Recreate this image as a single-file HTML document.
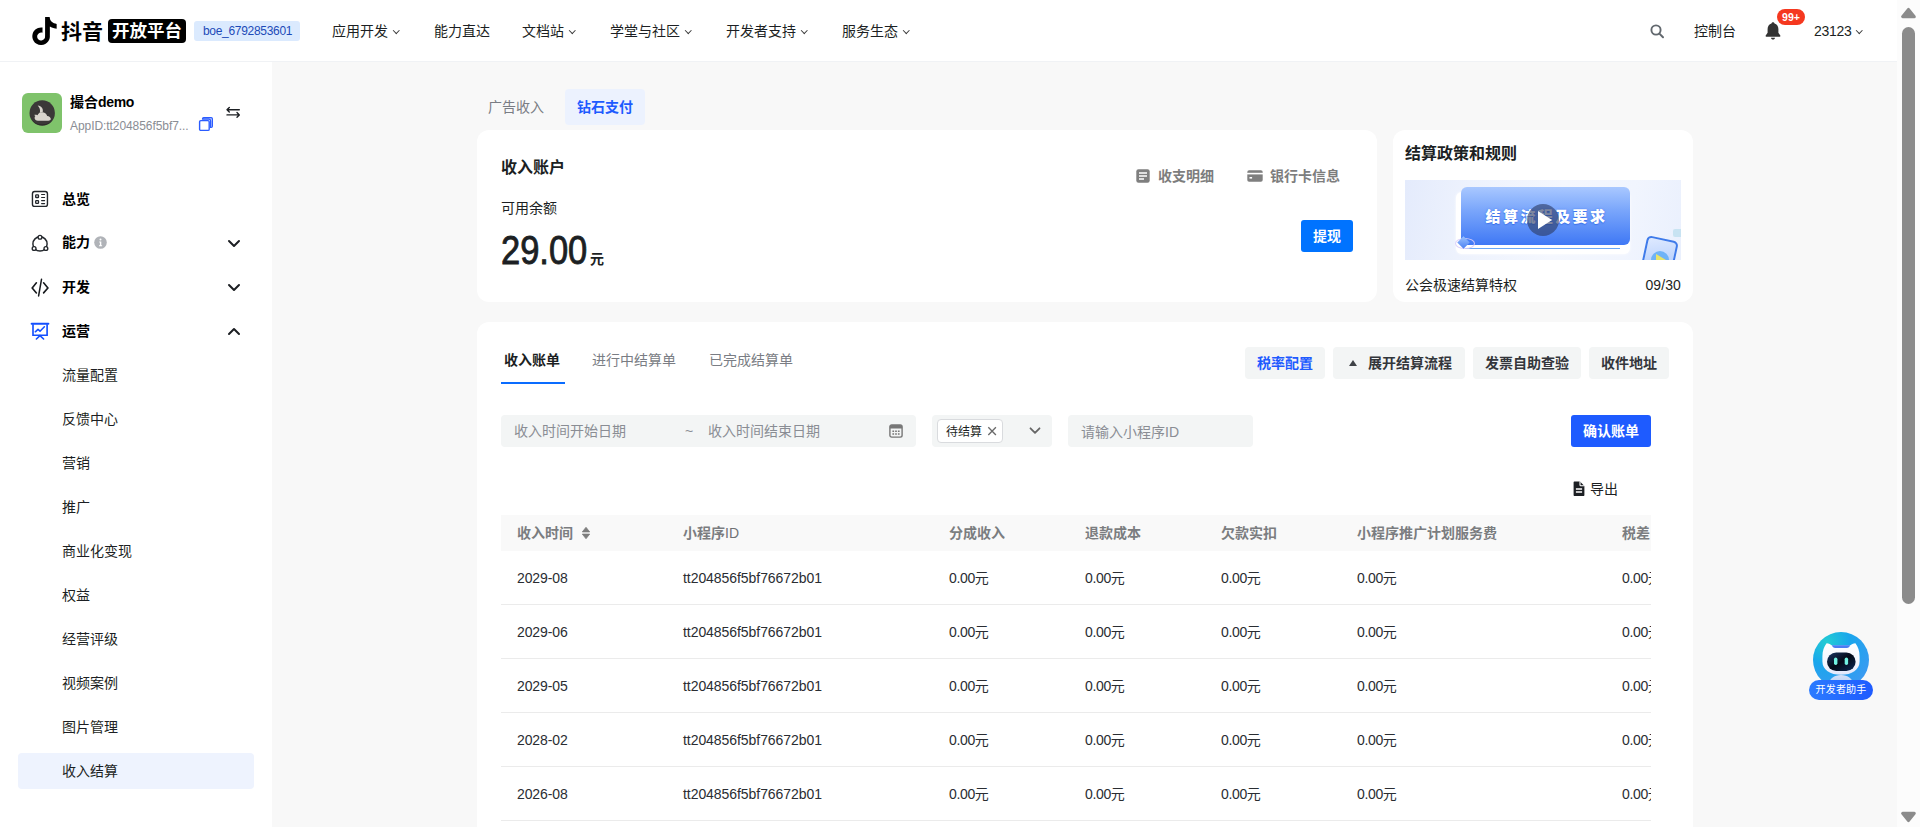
<!DOCTYPE html>
<html lang="zh-CN">
<head>
<meta charset="utf-8">
<title>抖音开放平台</title>
<style>
*{box-sizing:border-box;margin:0;padding:0}
html,body{width:1920px;height:827px;overflow:hidden;background:#f8f8f8;font-family:"Liberation Sans","Noto Sans CJK SC",sans-serif;font-size:14px;color:#1c1f23;-webkit-font-smoothing:antialiased}
.abs{position:absolute}
#hdr{position:absolute;left:0;top:0;width:1897px;height:62px;background:#fff;border-bottom:1px solid #f0f2f5}
#side{position:absolute;left:0;top:62px;width:272px;height:765px;background:#fff}
#sb{position:absolute;left:1897px;top:0;width:23px;height:827px;background:#fcfcfc}
.t{position:absolute;white-space:nowrap;line-height:20px}
.b{font-weight:700}
.card{position:absolute;background:#fff;border-radius:12px}

.nav{top:21px;font-size:14px;line-height:20px;color:#1c1f23}
.chv{display:inline-block;width:4.500px;height:4.500px;border-right:1.400px solid #3a3a3a;border-bottom:1.400px solid #3a3a3a;transform:rotate(45deg);margin-left:6px;position:relative;top:-4px}

.m1{left:62px;font-size:14px;color:#000}
.m2{left:62px;font-size:14px;color:#1c1f23}

.btn{position:absolute;top:347px;height:32px;border-radius:4px;background:#f3f5f5}
.inp{position:absolute;top:415px;height:32px;border-radius:4px;background:#f3f5f5}
.ph{color:#8a8d94}
.th{top:8px;font-weight:700;color:#7b7d80;font-size:14px}
.td{color:#2a2d32;font-size:14px;letter-spacing:-0.350px}
</style>
</head>
<body>
<div id="hdr">
<svg class="abs" style="left:32px;top:17px" width="25" height="28" viewBox="1.5 0 21 24"><path fill="#000" d="M12.525.02c1.31-.02 2.61-.01 3.91-.02.08 1.53.63 3.09 1.75 4.17 1.12 1.11 2.7 1.62 4.24 1.79v4.03c-1.44-.05-2.89-.35-4.2-.97-.57-.26-1.1-.59-1.62-.93-.01 2.92.01 5.84-.02 8.75-.08 1.4-.54 2.79-1.35 3.94-1.31 1.92-3.58 3.17-5.91 3.21-1.43.08-2.86-.31-4.08-1.03-2.02-1.19-3.44-3.37-3.65-5.71-.02-.5-.03-1-.01-1.49.18-1.9 1.12-3.72 2.58-4.96 1.66-1.44 3.98-2.13 6.15-1.72.02 1.48-.04 2.96-.04 4.44-.99-.32-2.15-.23-3.02.37-.63.41-1.11 1.04-1.36 1.75-.21.51-.15 1.07-.14 1.61.24 1.64 1.82 3.02 3.5 2.87 1.12-.01 2.19-.66 2.77-1.61.19-.33.4-.67.41-1.06.1-1.79.06-3.57.07-5.36.01-4.03-.01-8.05.02-12.07z"/></svg>
<div class="t" style="left:61px;top:17px;font-size:21px;line-height:30px;font-weight:700;color:#000;letter-spacing:0px">抖音</div>
<div class="abs" style="left:108px;top:19px;width:78px;height:24px;background:#000;border-radius:4px"></div>
<div class="t" style="left:112px;top:16px;font-size:17.5px;line-height:30px;font-weight:700;color:#fff">开放平台</div>
<div class="abs" style="left:194px;top:21px;width:106px;height:20px;background:#dbeafe;border-radius:3px"></div>
<div class="t" style="left:203px;top:21px;font-size:12px;line-height:20px;color:#1d4ab8;letter-spacing:-0.3px">boe_6792853601</div>
<div class="t nav" style="left:332px">应用开发<i class="chv"></i></div>
<div class="t nav" style="left:434px">能力直达</div>
<div class="t nav" style="left:522px">文档站<i class="chv"></i></div>
<div class="t nav" style="left:610px">学堂与社区<i class="chv"></i></div>
<div class="t nav" style="left:726px">开发者支持<i class="chv"></i></div>
<div class="t nav" style="left:842px">服务生态<i class="chv"></i></div>
<svg class="abs" style="left:1649px;top:23px" width="16" height="16" viewBox="0 0 16 16"><circle cx="7" cy="7" r="4.600" fill="none" stroke="#62686e" stroke-width="1.900"/><path d="M10.400 10.600L14 14.200" stroke="#62686e" stroke-width="2" stroke-linecap="round"/></svg>
<div class="t nav" style="left:1694px">控制台</div>
<svg class="abs" style="left:1764px;top:21px" width="18" height="20" viewBox="0 0 18 20"><path fill="#333" d="M9 1.2c-.9 0-1.5.6-1.5 1.3C5 3.300 3.600 5.400 3.600 8v3.800L1.700 14.600c-.3.500 0 1.100.6 1.100h13.400c.6 0 .9-.6.6-1.100L14.400 11.800V8c0-2.600-1.400-4.700-3.900-5.500C10.500 1.800 9.900 1.200 9 1.200zM7 16.700h4c0 1.100-.9 1.900-2 1.900s-2-.8-2-1.900z"/></svg>
<div class="abs" style="left:1777px;top:9px;width:28px;height:16px;border-radius:8px;background:#f5381f"></div>
<div class="t" style="left:1777px;top:9px;width:28px;text-align:center;font-size:10.500px;line-height:17px;font-weight:700;color:#fff">99+</div>
<div class="t nav" style="left:1814px;letter-spacing:-0.3px">23123<i class="chv"></i></div>
</div>
<div id="side">
<div class="abs" style="left:22px;top:31px;width:40px;height:40px;border-radius:6px;background:#7fc36b"></div>
<svg class="abs" style="left:22px;top:31px" width="40" height="40" viewBox="0 0 40 40"><circle cx="20.200" cy="20" r="12.700" fill="#3b3838"/><path d="M9.500 26.500a12.700 12.700 0 0 0 21.400 0a14 14 0 0 1-21.400 0z" fill="#2b2828"/><path fill="#d9d4cd" d="M15.700 12.600C19.600 13 21.600 16 20.700 19.300C19.800 19 18.600 19.400 17.700 20.300C18.600 17.500 17.800 14.600 15.700 12.600Z"/><path fill="#d9d4cd" d="M12.200 21.900c1.200-.2 2.300-.1 3.300.4C16.300 20.300 18 19.200 20 19.200c2.600 0 4.600 1.600 5.200 3.800 2 .2 3.600 1.400 3.600 3 0 1.200-1.200 1.700-2.400 1.700H16c-2 0-3.400-1.200-3.400-2.800 0-.8.300-1.400.8-1.900-.5-.4-.9-.7-1.200-1.100z"/></svg>
<div class="t b" style="left:70px;top:30px;font-size:14px;color:#000">撮合<span style="letter-spacing:-0.35px">demo</span></div>
<div class="t" style="left:70px;top:55px;font-size:12px;line-height:18px;color:#8a8d94;letter-spacing:-0.07px">AppID:tt204856f5bf7...</div>
<svg class="abs" style="left:198px;top:54px" width="16" height="16" viewBox="0 0 16 16"><path d="M4.500 3.200V2.800c0-.7.500-1.200 1.200-1.200h7.500c.7 0 1.200.5 1.200 1.200v7.500c0 .7-.5 1.200-1.200 1.200h-.6V5c0-1-.8-1.800-1.800-1.800z" fill="#c3d0ff" stroke="#2b5cff" stroke-width="1.200"/><rect x="1.600" y="4.600" width="9.600" height="9.800" rx="1.200" fill="#fff" stroke="#2b5cff" stroke-width="1.400"/></svg>
<svg class="abs" style="left:225px;top:42px" width="16" height="16" viewBox="0 0 16 16"><path d="M2 5.700H14.300M2 5.700l2.300-2.300M2 5.700l2.300 2.300M14.300 10.900H2M14.300 10.900l-2.300-2.300M14.300 10.900l-2.300 2.300" fill="none" stroke="#1c1f23" stroke-width="1.400" stroke-linecap="round" stroke-linejoin="round"/></svg>

<svg class="abs" style="left:31px;top:128px" width="18" height="18" viewBox="0 0 18 18"><rect x="1.450" y="1.550" width="15" height="14.800" rx="2.200" fill="none" stroke="#22262b" stroke-width="1.400"/><rect x="4.700" y="4.800" width="2.800" height="2.700" rx=".6" fill="none" stroke="#22262b" stroke-width="1.300"/><rect x="4.700" y="10.700" width="2.800" height="2.700" rx=".6" fill="none" stroke="#22262b" stroke-width="1.300"/><path d="M10.600 4.500h3M10.600 7.500h3M10.600 10.600h3M10.600 13.600h3" stroke="#22262b" stroke-width="1.150" stroke-linecap="round"/></svg>
<div class="t b m1" style="top:127px">总览</div>

<svg class="abs" style="left:31px;top:171px" width="18" height="20" viewBox="0 0 18 20"><circle cx="9" cy="10.900" r="7.100" fill="none" stroke="#22262b" stroke-width="1.450"/><circle cx="9" cy="4.200" r="1.900" fill="#fff" stroke="#22262b" stroke-width="1.350"/><circle cx="3.100" cy="15.500" r="1.900" fill="#fff" stroke="#22262b" stroke-width="1.350"/><circle cx="14.900" cy="15.500" r="1.900" fill="#fff" stroke="#22262b" stroke-width="1.350"/></svg>
<div class="t b m1" style="top:170px">能力</div>
<svg class="abs" style="left:94px;top:174px" width="13" height="13" viewBox="0 0 13 13"><circle cx="6.500" cy="6.500" r="6.300" fill="#b0b3b8"/><circle cx="6.500" cy="3.500" r="1" fill="#fff"/><path d="M5.300 5.600h2v3.600h.8v1H5v-1h.9V6.600h-.6z" fill="#fff"/></svg>
<svg class="abs chev" style="left:227px;top:177px" width="14" height="10" viewBox="0 0 14 10"><path d="M2 2l5 5 5-5" fill="none" stroke="#1c1f23" stroke-width="2" stroke-linecap="round" stroke-linejoin="round"/></svg>

<svg class="abs" style="left:30px;top:216px" width="20" height="20" viewBox="0 0 20 20"><path d="M6.400 4.800L2.200 10 6.400 14.900M13.600 4.800L17.900 10 13.600 14.900" fill="none" stroke="#16191d" stroke-width="1.600" stroke-linecap="round" stroke-linejoin="miter"/><path d="M11.500 1.300L8.600 17.900" fill="none" stroke="#16191d" stroke-width="1.500" stroke-linecap="round"/></svg>
<div class="t b m1" style="top:215px">开发</div>
<svg class="abs chev" style="left:227px;top:221px" width="14" height="10" viewBox="0 0 14 10"><path d="M2 2l5 5 5-5" fill="none" stroke="#1c1f23" stroke-width="2" stroke-linecap="round" stroke-linejoin="round"/></svg>

<svg class="abs" style="left:30px;top:260px" width="20" height="20" viewBox="0 0 20 20"><path d="M1.600 1.800h16.800" stroke="#1450ff" stroke-width="1.900" stroke-linecap="round"/><path d="M3 2.200v11h14.100v-11" fill="none" stroke="#1450ff" stroke-width="1.650"/><path d="M5.300 9.800l2.700-2.400 2 1.800 4.400-4.400" fill="none" stroke="#1450ff" stroke-width="1.550" stroke-linejoin="round" stroke-linecap="round"/><path d="M10 13.600L6.400 17M10 13.600l3.600 3.400" stroke="#1450ff" stroke-width="1.600" stroke-linecap="round"/></svg>
<div class="t b m1" style="top:259px">运营</div>
<svg class="abs chev" style="left:227px;top:264px" width="14" height="10" viewBox="0 0 14 10"><path d="M2 8l5-5 5 5" fill="none" stroke="#1c1f23" stroke-width="2" stroke-linecap="round" stroke-linejoin="round"/></svg>

<div class="abs" style="left:18px;top:691px;width:236px;height:36px;border-radius:4px;background:#eef3fe"></div>
<div class="t m2" style="top:303px">流量配置</div>
<div class="t m2" style="top:347px">反馈中心</div>
<div class="t m2" style="top:391px">营销</div>
<div class="t m2" style="top:435px">推广</div>
<div class="t m2" style="top:479px">商业化变现</div>
<div class="t m2" style="top:523px">权益</div>
<div class="t m2" style="top:567px">经营评级</div>
<div class="t m2" style="top:611px">视频案例</div>
<div class="t m2" style="top:655px">图片管理</div>
<div class="t m2" style="top:699px">收入结算</div>
</div>
<div id="main">
<div class="t" style="left:488px;top:97px;color:#7a7d84">广告收入</div>
<div class="abs" style="left:565px;top:89px;width:80px;height:36px;border-radius:4px;background:#ecf2fe"></div>
<div class="t b" style="left:577px;top:97px;color:#1e5bff">钻石支付</div>

<div class="card" style="left:477px;top:130px;width:900px;height:172px"></div>
<div class="t b" style="left:501px;top:157px;font-size:16px;line-height:22px;color:#1c1f23">收入账户</div>
<div class="t" style="left:501px;top:198px;color:#1c1f23">可用余额</div>
<div class="t" id="amt" style="left:500.500px;top:228px;font-size:40px;line-height:44px;font-weight:400;-webkit-text-stroke:0.9px #1c1f23;color:#1c1f23;transform-origin:0 50%;transform:scaleX(0.862);letter-spacing:0">29.00</div>
<div class="t b" style="left:590px;top:249px;font-size:14px;color:#1c1f23">元</div>
<svg class="abs" style="left:1136px;top:169px" width="14" height="14" viewBox="0 0 14 14"><rect x="0.300" y="0.300" width="13.400" height="13.400" rx="2.200" fill="#7f7f7f"/><path d="M3 4h8M3 7h8M3 10h5" stroke="#fff" stroke-width="1.300"/></svg>
<div class="t b" style="left:1158px;top:166px;color:#7d7d7d">收支明细</div>
<svg class="abs" style="left:1247px;top:170px" width="16" height="12" viewBox="0 0 16 12"><rect x="0.300" y="0.300" width="15.400" height="11.400" rx="1.800" fill="#7f7f7f"/><rect x="0" y="2.800" width="16" height="1.600" fill="#fff"/><rect x="2.500" y="7" width="2.600" height="1.600" fill="#fff"/></svg>
<div class="t b" style="left:1270px;top:166px;color:#7d7d7d">银行卡信息</div>
<div class="abs" style="left:1301px;top:220px;width:52px;height:32px;border-radius:3px;background:#0073ff"></div>
<div class="t b" style="left:1301px;top:226px;width:52px;text-align:center;color:#fff">提现</div>

<div class="card" style="left:1393px;top:130px;width:300px;height:172px"></div>
<div class="t b" style="left:1405px;top:143px;font-size:16px;line-height:22px;color:#1c1f23">结算政策和规则</div>
<div id="vid" class="abs" style="left:1405px;top:180px;width:276px;height:80px;overflow:hidden;background:linear-gradient(100deg,#e4ebfc 0%,#edf2fd 22%,#f4f7fe 55%,#f1f5fe 80%,#eaf0fd 100%)">
  <div class="abs" style="left:51px;top:12px;width:174px;height:62px;border-radius:6px;background:#fff;box-shadow:0 0 3px #fff"></div>
  <div class="abs" style="left:56px;top:7px;width:169px;height:58px;border-radius:6px;background:linear-gradient(180deg,#a9c8ff 0%,#7aa6fb 40%,#3f78f5 100%)"></div>
  <div class="abs" style="left:60px;top:68px;width:155px;height:1px;background:#69a7f7"></div>
  <div class="t" style="left:56px;top:26px;width:169px;text-align:center;font-size:15px;line-height:22px;font-weight:900;color:#fff;letter-spacing:2.400px;text-indent:2px;text-shadow:0 1px 1px #3c72ea,0 0 2px #4a7ff0">结算流程及要求</div>
  <div class="abs" style="left:50px;top:58px;width:20px;height:11px;border-radius:50%;border:1.500px solid #d9cdf8;opacity:.9"></div>
  <div class="abs" style="left:53px;top:57px;width:11px;height:11px;background:linear-gradient(135deg,#9cc4ff,#4b7ff2);transform:rotate(45deg) scale(.8)"></div>
  <div class="abs" style="left:238px;top:58px;width:32px;height:40px;border-radius:5px;border:2.500px solid #3f7bea;background:linear-gradient(160deg,#dfeaff,#a5c4fb);transform:rotate(12deg)"></div>
  <div class="abs" style="left:246px;top:71px;width:18px;height:18px;border-radius:50%;background:#6fb3f7"></div>
  <div class="abs" style="left:251px;top:74px;width:0;height:0;border-left:10px solid #e9e46a;border-top:6px solid transparent;border-bottom:6px solid transparent"></div>
  <div class="abs" style="left:268px;top:49px;width:10px;height:8px;border-radius:2px;background:#bfe0ef;opacity:.8"></div>
  <div class="abs" style="left:122px;top:24px;width:32px;height:32px;border-radius:50%;background:rgba(45,60,100,.62)"></div>
  <div class="abs" style="left:133px;top:31px;width:0;height:0;border-left:14px solid #fff;border-top:9px solid transparent;border-bottom:9px solid transparent"></div>
</div>
<div class="t" style="left:1405px;top:275px;color:#1c1f23">公会极速结算特权</div>
<div class="t" style="left:1601px;top:275px;width:80px;text-align:right;color:#1c1f23;letter-spacing:0.100px">09/30</div>

<div class="card" style="left:477px;top:322px;width:1216px;height:540px"></div>
<div class="t b" style="left:504px;top:350px;color:#1c1f23">收入账单</div>
<div class="abs" style="left:501px;top:382px;width:64px;height:2px;background:#0a6cff"></div>
<div class="t" style="left:592px;top:350px;color:#7a7d84">进行中结算单</div>
<div class="t" style="left:709px;top:350px;color:#7a7d84">已完成结算单</div>

<div class="btn" style="left:1245px;width:80px"></div><div class="t b" style="left:1245px;top:353px;width:80px;text-align:center;color:#1e5bff">税率配置</div>
<div class="btn" style="left:1333px;width:132px"></div>
<div class="abs" style="left:1349px;top:360px;width:0;height:0;border-bottom:6.500px solid #404347;border-left:4.500px solid transparent;border-right:4.500px solid transparent"></div>
<div class="t b" style="left:1368px;top:353px;color:#33363b">展开结算流程</div>
<div class="btn" style="left:1473px;width:108px"></div><div class="t b" style="left:1473px;top:353px;width:108px;text-align:center;color:#33363b">发票自助查验</div>
<div class="btn" style="left:1589px;width:80px"></div><div class="t b" style="left:1589px;top:353px;width:80px;text-align:center;color:#33363b">收件地址</div>

<div class="inp" style="left:501px;width:415px"></div>
<div class="t ph" style="left:514px;top:421px">收入时间开始日期</div>
<div class="t ph" style="left:685px;top:421px">~</div>
<div class="t ph" style="left:708px;top:421px">收入时间结束日期</div>
<svg class="abs" style="left:889px;top:424px" width="14" height="14" viewBox="0 0 14 14"><rect x="0.900" y="0.900" width="12.200" height="12.200" rx="1.800" fill="none" stroke="#777" stroke-width="1.400"/><path d="M.9 4.400V2.700c0-1 .8-1.800 1.800-1.800h8.600c1 0 1.800.8 1.800 1.800v1.700z" fill="#777"/><path d="M3.400 7.300h1.700M6.150 7.300h1.700M8.900 7.300h1.700M3.400 10h1.700M6.150 10h1.700M8.900 10h1.700" stroke="#777" stroke-width="1.500"/></svg>
<div class="inp" style="left:932px;width:120px"></div>
<div class="abs" style="left:937px;top:419px;width:66px;height:24px;border-radius:4px;background:#fff;border:1px solid #d9dbde"></div>
<div class="t" style="left:946px;top:422px;font-size:12px;color:#1c1f23">待结算</div>
<svg class="abs" style="left:986px;top:425px" width="12" height="12" viewBox="0 0 12 12"><path d="M2.300 2.300l7.600 7.600M9.900 2.300l-7.600 7.600" stroke="#6a6a6a" stroke-width="1.350"/></svg>
<svg class="abs" style="left:1028px;top:426px" width="14" height="10" viewBox="0 0 14 10"><path d="M2.500 2.300l4.500 4.500 4.500-4.500" fill="none" stroke="#666" stroke-width="1.800" stroke-linecap="round" stroke-linejoin="round"/></svg>
<div class="inp" style="left:1068px;width:185px"></div>
<div class="t ph" style="left:1081px;top:422px">请输入小程序ID</div>
<div class="abs" style="left:1571px;top:415px;width:80px;height:32px;border-radius:3px;background:#1e5bff"></div>
<div class="t b" style="left:1571px;top:421px;width:80px;text-align:center;color:#fff">确认账单</div>

<svg class="abs" style="left:1572px;top:481px" width="14" height="16" viewBox="0 0 14 16"><path d="M1.600 1.500c0-.6.400-1 1-1h5.400l4.400 4.400v9c0 .6-.4 1-1 1H2.600c-.6 0-1-.4-1-1z" fill="#1c1f23"/><path d="M8 .3v3.700c0 .5.300.8.800.8h3.800" fill="none" stroke="#fff" stroke-width="1.100"/><path d="M3.900 8h6.200M3.900 11h6.200" stroke="#fff" stroke-width="1.400"/></svg>
<div class="t" style="left:1590px;top:479px;color:#1c1f23">导出</div>

<div class="abs" style="left:501px;top:515px;width:1150px;height:36px;background:#f9f9f9"></div>
<div id="tbl" class="abs" style="left:501px;top:515px;width:1150px;height:312px;overflow:hidden">
<div class="t th" style="left:16px">收入时间</div>
<svg class="abs" style="left:79px;top:11px" width="12" height="14" viewBox="0 0 12 14"><path d="M6 1.300L9.700 5.900H2.300z" fill="#7d7d7d" stroke="#7d7d7d" stroke-width=".8" stroke-linejoin="round"/><path d="M6 12.700L2.300 8.100h7.400z" fill="#7d7d7d" stroke="#7d7d7d" stroke-width=".8" stroke-linejoin="round"/></svg>
<div class="t th" style="left:182px">小程序<span style="font-weight:400;color:#6f7174">ID</span></div>
<div class="t th" style="left:448px">分成收入</div>
<div class="t th" style="left:584px">退款成本</div>
<div class="t th" style="left:720px">欠款实扣</div>
<div class="t th" style="left:856px">小程序推广计划服务费</div>
<div class="t th" style="left:1121px">税差</div>
<div class="t td" style="left:16px;top:53px;letter-spacing:-0.1px">2029-08</div><div class="t td" style="left:182px;top:53px;letter-spacing:-0.06px">tt204856f5bf76672b01</div><div class="t td" style="left:448px;top:53px">0.00元</div><div class="t td" style="left:584px;top:53px">0.00元</div><div class="t td" style="left:720px;top:53px">0.00元</div><div class="t td" style="left:856px;top:53px">0.00元</div><div class="t td" style="left:1121px;top:53px">0.00元</div><div class="abs" style="left:0;top:89px;width:1150px;height:1px;background:#ebebeb"></div>
<div class="t td" style="left:16px;top:107px;letter-spacing:-0.1px">2029-06</div><div class="t td" style="left:182px;top:107px;letter-spacing:-0.06px">tt204856f5bf76672b01</div><div class="t td" style="left:448px;top:107px">0.00元</div><div class="t td" style="left:584px;top:107px">0.00元</div><div class="t td" style="left:720px;top:107px">0.00元</div><div class="t td" style="left:856px;top:107px">0.00元</div><div class="t td" style="left:1121px;top:107px">0.00元</div><div class="abs" style="left:0;top:143px;width:1150px;height:1px;background:#ebebeb"></div>
<div class="t td" style="left:16px;top:161px;letter-spacing:-0.1px">2029-05</div><div class="t td" style="left:182px;top:161px;letter-spacing:-0.06px">tt204856f5bf76672b01</div><div class="t td" style="left:448px;top:161px">0.00元</div><div class="t td" style="left:584px;top:161px">0.00元</div><div class="t td" style="left:720px;top:161px">0.00元</div><div class="t td" style="left:856px;top:161px">0.00元</div><div class="t td" style="left:1121px;top:161px">0.00元</div><div class="abs" style="left:0;top:197px;width:1150px;height:1px;background:#ebebeb"></div>
<div class="t td" style="left:16px;top:215px;letter-spacing:-0.1px">2028-02</div><div class="t td" style="left:182px;top:215px;letter-spacing:-0.06px">tt204856f5bf76672b01</div><div class="t td" style="left:448px;top:215px">0.00元</div><div class="t td" style="left:584px;top:215px">0.00元</div><div class="t td" style="left:720px;top:215px">0.00元</div><div class="t td" style="left:856px;top:215px">0.00元</div><div class="t td" style="left:1121px;top:215px">0.00元</div><div class="abs" style="left:0;top:251px;width:1150px;height:1px;background:#ebebeb"></div>
<div class="t td" style="left:16px;top:269px;letter-spacing:-0.1px">2026-08</div><div class="t td" style="left:182px;top:269px;letter-spacing:-0.06px">tt204856f5bf76672b01</div><div class="t td" style="left:448px;top:269px">0.00元</div><div class="t td" style="left:584px;top:269px">0.00元</div><div class="t td" style="left:720px;top:269px">0.00元</div><div class="t td" style="left:856px;top:269px">0.00元</div><div class="t td" style="left:1121px;top:269px">0.00元</div><div class="abs" style="left:0;top:305px;width:1150px;height:1px;background:#ebebeb"></div>

</div>

<svg class="abs" style="left:1809px;top:628px" width="64" height="64" viewBox="0 0 64 64">
<defs>
<radialGradient id="rg1" cx="0.25" cy="0.18" r="0.9"><stop offset="0" stop-color="#23cdd3"/><stop offset="0.45" stop-color="#1aa6ec"/><stop offset="1" stop-color="#3a9af2"/></radialGradient>
<linearGradient id="rg2" x1="0" y1="0" x2="0" y2="1"><stop offset="0" stop-color="#ffffff"/><stop offset="0.7" stop-color="#f3f5fe"/><stop offset="1" stop-color="#dfe6fb"/></linearGradient>
<linearGradient id="rg3" x1="0" y1="0" x2="1" y2="1"><stop offset="0" stop-color="#1b3866"/><stop offset="0.5" stop-color="#050a18"/><stop offset="1" stop-color="#0c2a57"/></linearGradient>
<linearGradient id="rg4" x1="0" y1="0" x2="0" y2="1"><stop offset="0" stop-color="#d5e0f8"/><stop offset="1" stop-color="#9cc4f4"/></linearGradient>
<clipPath id="rc"><circle cx="32" cy="32" r="28"/></clipPath>
</defs>
<circle cx="32" cy="32" r="28" fill="url(#rg1)"/>
<g clip-path="url(#rc)">
<path d="M20 56c0-5 5-9 12-9s12 4 12 9v6H20z" fill="url(#rg4)"/>
<path d="M17.600 15.200C19.800 15.200 21.600 16.300 23 17.400H41C42.400 16.300 44.200 15.200 46.400 15.200C49 18.500 50.600 23 50.600 28.500V33.500C50.600 41.800 43 46.800 32 46.800S13.400 41.800 13.400 33.500V28.500C13.400 23 15 18.500 17.600 15.200Z" fill="url(#rg2)"/>
<path d="M23 17.200h18c-.4 1.700-1.600 2.700-3.200 2.700H26.200c-1.600 0-2.800-1-3.200-2.700z" fill="#4c7cf3"/>
<rect x="18" y="24.500" width="28.600" height="18.500" rx="9.200" fill="url(#rg3)"/>
<rect x="25" y="29.500" width="3.400" height="7.400" rx="1.700" fill="#72f2e2"/>
<rect x="35.700" y="29.500" width="3.400" height="7.400" rx="1.700" fill="#72f2e2"/>
</g>
</svg>
<div class="abs" style="left:1809px;top:680px;width:64px;height:20px;border-radius:10px;background:linear-gradient(90deg,#2b7bff,#1e5bff)"></div>
<div class="t" style="left:1809px;top:680px;width:64px;text-align:center;font-size:10px;line-height:20px;color:#fff;font-weight:400;letter-spacing:.2px">开发者助手</div>
</div>
<div id="sb">
<div class="abs" style="left:5px;top:27px;width:13px;height:577px;border-radius:6.500px;background:#8b8b8b"></div>
<svg class="abs" style="left:3px;top:6px" width="17" height="14" viewBox="0 0 17 14"><path d="M2.600 10.700H14.300L8.450 3.400z" fill="#8b8b8b" stroke="#8b8b8b" stroke-width="3" stroke-linejoin="round"/></svg>
<svg class="abs" style="left:3px;top:810px" width="17" height="14" viewBox="0 0 17 14"><path d="M2.600 3.300H14.300L8.450 10.600z" fill="#8b8b8b" stroke="#8b8b8b" stroke-width="3" stroke-linejoin="round"/></svg>
</div>
</body>
</html>
